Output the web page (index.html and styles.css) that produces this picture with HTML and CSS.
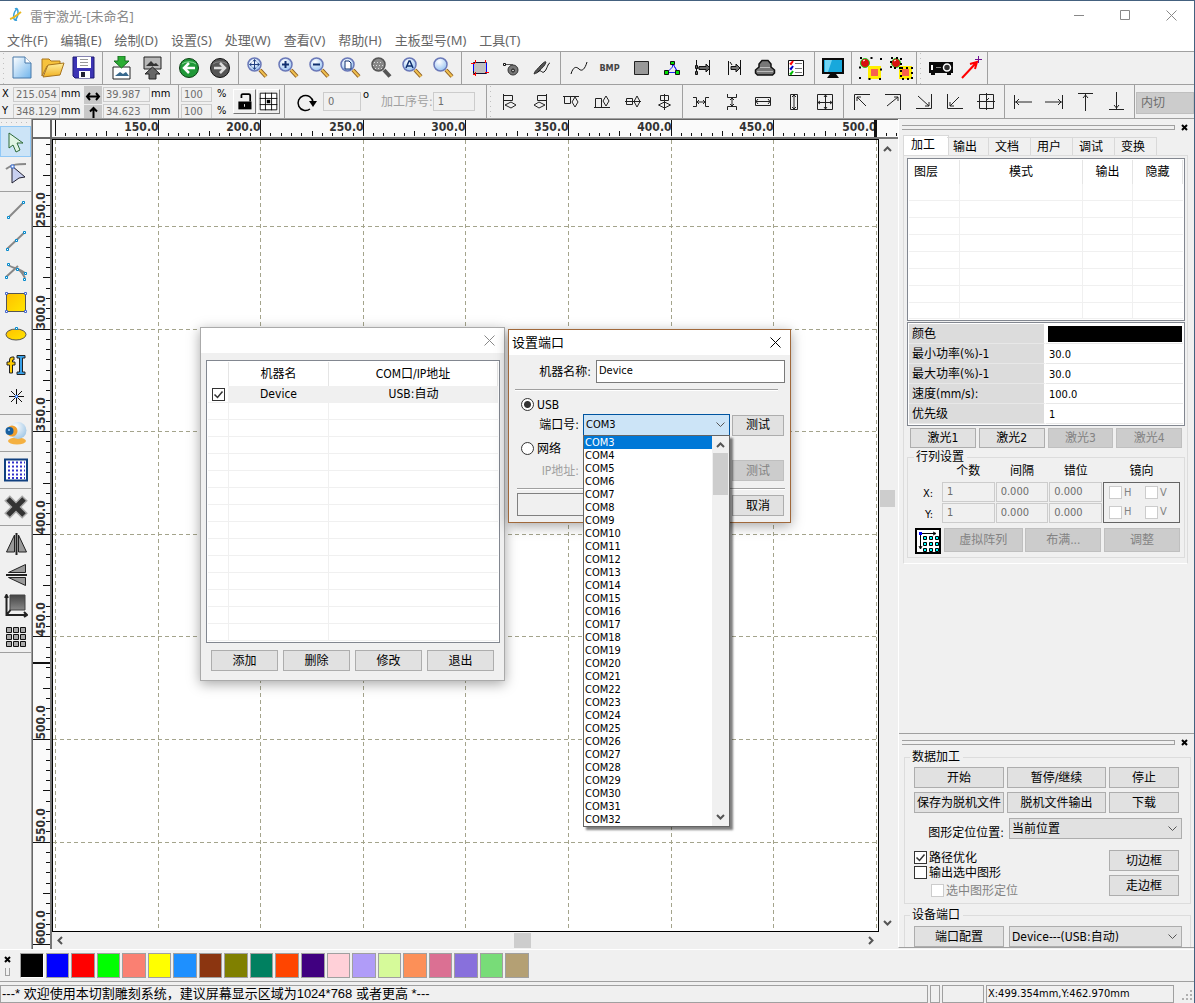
FILE: index.html
```html
<!DOCTYPE html>
<html lang="zh-CN">
<head>
<meta charset="utf-8">
<title>雷宇激光-[未命名]</title>
<link rel="stylesheet" href="styles.css">
</head>
<body>
<svg class="defs" aria-hidden="true">
  <defs>
    <linearGradient id="gPage" x1="0" y1="0" x2="1" y2="1"><stop offset="0" stop-color="#fff"/><stop offset="1" stop-color="#6fb4ec"/></linearGradient>
    <linearGradient id="gFolder" x1="0" y1="0" x2="0" y2="1"><stop offset="0" stop-color="#fff0a0"/><stop offset="1" stop-color="#f0b020"/></linearGradient>
    <radialGradient id="gLens" cx="0.4" cy="0.3" r="0.8"><stop offset="0" stop-color="#fff"/><stop offset="1" stop-color="#8cbcf0"/></radialGradient>
    <linearGradient id="gGold" x1="0" y1="0" x2="1" y2="1"><stop offset="0" stop-color="#ffc000"/><stop offset="1" stop-color="#ffe600"/></linearGradient>
    <linearGradient id="gDark" x1="0" y1="0" x2="0" y2="1"><stop offset="0" stop-color="#444"/><stop offset="1" stop-color="#888"/></linearGradient>
    <radialGradient id="gBall" cx="0.35" cy="0.3" r="0.8"><stop offset="0" stop-color="#fff"/><stop offset="1" stop-color="#9cc4e4"/></radialGradient>
  </defs>
  <symbol id="mag" viewBox="0 0 24 24"><path d="M15 14l6 6.500" stroke="#8a5a20" stroke-width="4"/><path d="M15 14l6 6.500" stroke="#f0c050" stroke-width="2"/><circle cx="9.500" cy="8.500" r="6.500" fill="url(#gLens)" stroke="#6a78b8" stroke-width="1.500"/></symbol>
  <symbol id="ball" viewBox="0 0 24 24"><circle cx="7" cy="7" r="4.500" fill="#d81010" stroke="#20d020"/><path d="M5 5l2-1" stroke="#fff"/><rect x="11.500" y="11.500" width="10" height="10" fill="#f86050" stroke="#ffee00" stroke-width="3"/></symbol>
</svg>

<div class="window">
  <header class="titlebar">
    <svg class="logo" viewBox="0 0 16 16"><path d="M7 2c4-3 4 8 0 11M9 13c-5 2-4-8 0-11" fill="none" stroke="#38a0d8" stroke-width="1.500"/><path d="M2 12C6 11 9 8 13 5" fill="none" stroke="#e8b820" stroke-width="2"/></svg>
    <h1>雷宇激光-[未命名]</h1>
    <div class="caption">
      <button aria-label="最小化"><svg viewBox="0 0 11 11"><path d="M0 5.500h10"/></svg></button>
      <button aria-label="最大化"><svg viewBox="0 0 11 11"><path d="M.5.5h9v9h-9z"/></svg></button>
      <button aria-label="关闭"><svg viewBox="0 0 11 11"><path d="M.5.5l10 10M10.500.5l-10 10"/></svg></button>
    </div>
  </header>
  <nav class="menubar">
    <a href="#">文件(F)</a><a href="#">编辑(E)</a><a href="#">绘制(D)</a><a href="#">设置(S)</a><a href="#">处理(W)</a><a href="#">查看(V)</a><a href="#">帮助(H)</a><a href="#">主板型号(M)</a><a href="#">工具(T)</a>
  </nav>

  <div class="toolbar">
    <div class="group grip">
      <button class="tool" aria-label="新建"><svg viewBox="0 0 24 24"><path d="M3 1h12l6 6v15H3z" fill="url(#gPage)" stroke="#4878a8"/><path d="M15 1v6h6" fill="#fff" stroke="#4878a8"/></svg></button>
      <button class="tool" aria-label="打开"><svg viewBox="0 0 24 24"><path d="M1 3h7l2 2h9v5H6L1 20z" fill="#f6c23c" stroke="#a8741c"/><path d="M2 21L7 9l16-2-4 12z" fill="url(#gFolder)" stroke="#a8741c"/></svg></button>
      <button class="tool" aria-label="保存"><svg viewBox="0 0 24 24"><path d="M1 1h21v21H3l-2-2z" fill="#3c34b4" stroke="#1c1870"/><path d="M5 1h14v11H5z" fill="#fff"/><path d="M8 3.500h8M8 6.500h8M8 9.500h8" stroke="#999"/><path d="M7 15h11v7H7z" fill="#fff"/><path d="M9 16h4v5H9z" fill="#223"/></svg></button>
    </div>
    <div class="group">
      <button class="tool" aria-label="导入"><svg viewBox="0 0 24 24"><path d="M4 11h17v12H4z" fill="#fff" stroke="#222"/><path d="M6 20l5-4 3 2 3-2 3 4z" fill="#38688c"/><path d="M9 0h7v5h4l-7.500 7L5 5h4z" fill="#2cae34" stroke="#186c20"/></svg></button>
      <button class="tool" aria-label="导出"><svg viewBox="0 0 24 24"><path d="M4 1h17v12H4z" fill="#b8b8b8" stroke="#222"/><path d="M6 10l5-5 3 3 2-1 3 3z" fill="#333"/><path d="M9 23h7v-5h4l-7.500-7L5 18h4z" fill="#666" stroke="#222"/></svg></button>
    </div>
    <div class="group">
      <button class="tool" aria-label="撤销"><svg viewBox="0 0 24 24"><circle cx="12" cy="12" r="9.500" fill="#209838" stroke="#0c4014"/><path d="M5 8a9 6 0 0 1 14 0" fill="none" stroke="#8cd898"/><path d="M18 12H7m5-5l-5 5 5 5" fill="none" stroke="#fff" stroke-width="2.500"/></svg></button>
      <button class="tool" aria-label="重做"><svg viewBox="0 0 24 24"><circle cx="12" cy="12" r="9.500" fill="#555" stroke="#111"/><path d="M5 8a9 6 0 0 1 14 0" fill="none" stroke="#888"/><path d="M6 12h11m-5-5l5 5-5 5" fill="none" stroke="#ddd" stroke-width="2.500"/></svg></button>
    </div>
    <div class="group">
      <button class="tool" aria-label="平移"><svg viewBox="0 0 24 24"><use href="#mag"/><path d="M9.500 4v9M5 8.500h9M8 5.500l1.500-2 1.500 2M8 11.500l1.500 2 1.500-2M6.500 7l-2 1.500 2 1.500M12.500 7l2 1.500-2 1.500" fill="none" stroke="#204080"/></svg></button>
      <button class="tool" aria-label="放大"><svg viewBox="0 0 24 24"><use href="#mag"/><path d="M9.500 5v7M6 8.500h7" stroke="#103070" stroke-width="2"/></svg></button>
      <button class="tool" aria-label="缩小"><svg viewBox="0 0 24 24"><use href="#mag"/><path d="M6 8.500h7" stroke="#103070" stroke-width="2"/></svg></button>
      <button class="tool" aria-label="查看页面"><svg viewBox="0 0 24 24"><use href="#mag"/><path d="M7 5h4l2 2v6H7z" fill="#fff" stroke="#103070"/></svg></button>
      <button class="tool" aria-label="查看数据"><svg viewBox="0 0 24 24"><path d="M15 14l6 6.500" stroke="#555" stroke-width="4"/><circle cx="9.500" cy="8.500" r="6.500" fill="#888" stroke="#555" stroke-width="1.500"/><path d="M5 6.500h9M4 9.500h11M6 12.500h7" stroke="#ddd" stroke-dasharray="1 2"/></svg></button>
      <button class="tool" aria-label="查看全部"><svg viewBox="0 0 24 24"><use href="#mag"/><path d="M6 12l3-7h1l3 7M7 10h5" fill="none" stroke="#103070" stroke-width="1.500"/></svg></button>
      <button class="tool" aria-label="查看选择"><svg viewBox="0 0 24 24"><use href="#mag"/></svg></button>
    </div>
    <div class="group">
      <button class="tool" aria-label="跟踪边框"><svg viewBox="0 0 24 24"><path d="M5.500 6.500h13v11h-13z" fill="#c0c0c0" stroke="#101030"/><path d="M18.500 7v10M5.500 7v8" stroke="#00f"/><path d="M3 7.500h4M7.500 4v3M17.500 4v3M17 16.500h4M7.500 16v4M5 18.500h3" stroke="#f00"/></svg></button>
      <button class="tool" aria-label="设置切入点"><svg viewBox="0 0 24 24"><circle cx="14" cy="14" r="5" fill="#777" stroke="#333"/><circle cx="14" cy="14.500" r="1.500" fill="#bbb" stroke="#111"/><path d="M6 8.500h8" stroke="#555"/><path d="M4.500 7.500h2v2h-2z" fill="#fff" stroke="#111"/></svg></button>
      <button class="tool" aria-label="画笔"><svg viewBox="0 0 24 24"><path d="M4 18c1-4 5-6 6-8 3-3 5-5 6-4-1 4-4 6-6 8-2 3-4 3-6 4z" fill="#555" stroke="#333"/><path d="M8 16c3-4 4 3 7-1 2-2 3-8 5-8" fill="none" stroke="#111"/></svg></button>
    </div>
    <div class="group">
      <button class="tool" aria-label="曲线平滑"><svg viewBox="0 0 24 24"><path d="M4 18c2-7 5-8 8-5s6 0 8-7" fill="none" stroke="#111"/></svg></button>
      <button class="tool bmp" aria-label="位图">BMP</button>
      <button class="tool" aria-label="填充"><svg viewBox="0 0 24 24"><path d="M5.500 5.500h14v13h-14z" fill="#999" stroke="#222"/></svg></button>
      <button class="tool" aria-label="节点"><svg viewBox="0 0 24 24"><path d="M12.500 7v4L7 16.500h11zm0 0l5 9" fill="none" stroke="#22e"/><path d="M10.500 5.500h4v3h-4zM4.500 14.500h4v4h-4zM15.500 14.500h4v4h-4z" fill="#0d0" stroke="#111"/></svg></button>
      <button class="tool" aria-label="合并相连线"><svg viewBox="0 0 24 24"><path d="M5.500 4v12M18.500 4v15M5 12h3" stroke="#111"/><path d="M8 10.500h7V8l4 4-4 4v-2.500H8zM4.500 9.500h2v3h-2zM4.500 15.500h2v3h-2z" fill="#666" stroke="#111"/></svg></button>
      <button class="tool" aria-label="偏移"><svg viewBox="0 0 24 24"><path d="M6.500 5v14M18.500 4v15M8 6l2 3" stroke="#111"/><path d="M9 10.500h5V8l4 4-4 4v-2.500H9z" fill="#777" stroke="#111"/></svg></button>
      <button class="tool" aria-label="数据检查"><svg viewBox="0 0 24 24"><path d="M2.500 17v-3l3.500-3V8l3-3.500h6L18 8v3l3.500 3v3l-2 2h-15z" fill="#777" stroke="#111" stroke-width="1.500"/><path d="M7 11.500h10M4 15.500h16" stroke="#bbb"/></svg></button>
      <button class="tool" aria-label="加工预览"><svg viewBox="0 0 24 24"><path d="M4.500 4.500h15v15h-15z" fill="#fff" stroke="#111"/><path d="M11 7.500h7M11 12.500h7M11 16.500h7" stroke="#777"/><path d="M6 7l1 1 2-3" stroke="#f00" fill="none" stroke-width="2"/><path d="M6 12l1 1 2-3" stroke="#00c" fill="none" stroke-width="2"/><path d="M6 17l1 1 2-3" stroke="#0b0" fill="none" stroke-width="2"/></svg></button>
    </div>
    <div class="group">
      <button class="tool" aria-label="显示器"><svg viewBox="0 0 24 24"><path d="M1 2h22v16H1z" fill="#0a0a0a"/><path d="M3 4h18v12H3z" fill="#18a8dc"/><path d="M4 4h7l-4 12H4z" fill="#70d4f4"/><path d="M9 18h6l3 4H6z" fill="#0a0a0a"/></svg></button>
    </div>
    <div class="group tight">
      <button class="tool" aria-label="群组"><svg viewBox="0 0 24 24"><use href="#ball"/><path d="M2 2h21v21H2z" fill="none" stroke="#000" stroke-width="2" stroke-dasharray="2 8.500"/></svg></button>
      <button class="tool" aria-label="解散群组"><svg viewBox="0 0 24 24"><use href="#ball"/><path d="M2 2h10v10H2zM12 12h11v11H12z" fill="none" stroke="#000" stroke-width="2" stroke-dasharray="2 3"/></svg></button>
    </div>
    <div class="group grip after-tight">
      <button class="tool" aria-label="投影"><svg viewBox="0 0 24 24"><path d="M0 6h24v11h-2v2h-4v-2H6v2H2v-2H0z" fill="#0a0a0a"/><path d="M3 9v5" stroke="#fff" stroke-width="2"/><path d="M7 11.500h5" stroke="#888"/><circle cx="18" cy="11.500" r="3.500" fill="#333" stroke="#fff" stroke-width="1.500"/></svg></button>
      <button class="tool" aria-label="定位"><svg viewBox="0 0 24 24"><path d="M2 22L16 7m-6 1l7-2-2 7" fill="none" stroke="#f00" stroke-width="2"/><path d="M18.500 0v7M15 3.500h7" stroke="#701090"/></svg></button>
    </div>
  </div>

  <div class="toolbar second">
    <div class="group fields">
      <div class="coords">
        <label for="px">X</label><input id="px" value="215.054" disabled><span>mm</span>
        <label for="py">Y</label><input id="py" value="348.129" disabled><span>mm</span>
      </div>
      <svg class="extent" viewBox="0 0 18 32"><path d="M3 10.500h12M6 7l-3 3.500L6 14M12 7l3 3.500-3 3.500M9.500 22v10M6 25.500L9.500 22l3.500 3.500" fill="none" stroke="#000" stroke-width="2"/><path d="M0 18.500h18" stroke="#eee"/></svg>
      <div class="coords size">
        <input aria-label="宽度" value="39.987" disabled><span>mm</span>
        <input aria-label="高度" value="34.623" disabled><span>mm</span>
      </div>
    </div>
    <div class="group fields">
      <div class="coords scale">
        <input aria-label="横向比例" value="100" disabled><span>%</span>
        <input aria-label="纵向比例" value="100" disabled><span>%</span>
      </div>
      <button class="raised" aria-label="锁定比例"><svg viewBox="0 0 24 24"><path d="M5 12h15v9H5z"/><path d="M8.500 8V4.500Q8.500 3.500 10 3.500h7q1.500 0 1.500 1.500v7" fill="none" stroke="#000" stroke-width="2"/><path d="M12 15v3" stroke="#fff"/></svg></button>
      <button class="raised" aria-label="参考点"><svg viewBox="0 0 24 24"><path d="M2.500 2.500h19v19h-19zM8.500 2v20M15.500 2v20M2 8.500h20M2 15.500h20" fill="#fff" stroke="#000"/><path d="M10 10h4v4h-4z"/></svg></button>
    </div>
    <div class="group rotate">
      <svg class="turn" viewBox="0 0 24 24"><path d="M17 19a7.500 7.500 0 1 1 3-7" fill="none" stroke="#000" stroke-width="1.500"/><path d="M16 11h8l-4 6z"/></svg>
      <input aria-label="旋转角度" class="angle" value="0" disabled><span class="deg">o</span>
      <label class="muted" for="order">加工序号:</label><input id="order" class="order" value="1" disabled>
    </div>
    <div class="group grip line">
      <button class="tool" aria-label="左对齐"><svg viewBox="0 0 24 24"><path d="M6.500 4v16M7 5.500h8.500v5H7M8 15l6-3 5 3-5 3z"/></svg></button>
      <button class="tool" aria-label="右对齐"><svg viewBox="0 0 24 24"><path d="M18.500 4v16M18 5.500H9.500v5H18M17 15l-6-3-5 3 5 3z"/></svg></button>
      <button class="tool" aria-label="顶对齐"><svg viewBox="0 0 24 24"><path d="M4 6.500h16M5.500 7v6.500h6V7M16 7l3 5-3 5-3-5z"/></svg></button>
      <button class="tool" aria-label="底对齐"><svg viewBox="0 0 24 24"><path d="M4 17.500h16M5.500 17V8.500h6V17M16 6l3 5-3 5-3-5z"/></svg></button>
      <button class="tool" aria-label="水平居中"><svg viewBox="0 0 24 24"><path d="M4 11.500h16M5.500 8.500h6v6h-6zM16 6l3 5.500-3 5.500-3-5.500z"/></svg></button>
      <button class="tool" aria-label="垂直居中"><svg viewBox="0 0 24 24"><path d="M12.500 4v16M8.500 5.500h8v5h-8zM12.500 12l6 3-6 3-6-3z"/></svg></button>
    </div>
    <div class="group line">
      <button class="tool" aria-label="等水平间距"><svg viewBox="0 0 24 24"><path d="M4 7.500h3.500v9H4M20 7.500h-3.500v9H20M8 12h8M10 10l-2 2 2 2M14 10l2 2-2 2"/></svg></button>
      <button class="tool" aria-label="等垂直间距"><svg viewBox="0 0 24 24"><path d="M7.500 4v3.500h9V4M7.500 20v-3.500h9V20M12 8v8M10 10l2-2 2 2M10 14l2 2 2-2"/></svg></button>
      <button class="tool" aria-label="等宽"><svg viewBox="0 0 24 24"><path d="M4.500 7.500h15v8h-15zM4 11.500h16M7 9l-2 2.500L7 14M17 9l2 2.500-2 2.500"/></svg></button>
      <button class="tool" aria-label="等高"><svg viewBox="0 0 24 24"><path d="M8.500 4.500h7v15h-7zM12 4v16M10 7l2-2 2 2M10 17l2 2 2-2"/></svg></button>
      <button class="tool" aria-label="等大小"><svg viewBox="0 0 24 24"><path d="M4.500 4.500h15v15h-15zM4 12.500h16M12.500 4v16M11 7l1.500-2L14 7M11 17l1.500 2 1.500-2M7 11l-2 1.500L7 14M17 11l2 1.500-2 1.500"/></svg></button>
    </div>
    <div class="group line">
      <button class="tool" aria-label="左上"><svg viewBox="0 0 24 24"><path d="M4.500 20V4.500H20M7 7l9 9M7 11V7h4"/></svg></button>
      <button class="tool" aria-label="右上"><svg viewBox="0 0 24 24"><path d="M4 4.500h15.500V20M17 7l-11 9M13 7h4v4"/></svg></button>
      <button class="tool" aria-label="右下"><svg viewBox="0 0 24 24"><path d="M4 18.500h15.500V4M6 6l11 10M17 12v4h-4"/></svg></button>
      <button class="tool" aria-label="左下"><svg viewBox="0 0 24 24"><path d="M4.500 4v14.500H20M16 7l-9 9M7 12v4h4"/></svg></button>
      <button class="tool" aria-label="页面居中"><svg viewBox="0 0 24 24"><path d="M5.500 4.500h14v14h-14zM3 11.500h18M12.500 3v17M15 8l-4 4"/></svg></button>
    </div>
    <div class="group line">
      <button class="tool" aria-label="到左边"><svg viewBox="0 0 24 24"><path d="M3.500 5v14M4 12h17M8 9l-3 3 3 3"/></svg></button>
      <button class="tool" aria-label="到右边"><svg viewBox="0 0 24 24"><path d="M20.500 5v14M20 12H3M16 9l3 3-3 3"/></svg></button>
      <button class="tool" aria-label="到顶边"><svg viewBox="0 0 24 24"><path d="M5 3.500h15M12.500 4v17M10 8l2.500-3L15 8"/></svg></button>
      <button class="tool" aria-label="到底边"><svg viewBox="0 0 24 24"><path d="M5 19.500h15M12.500 2v17M10 15l2.500 3 2.500-3"/></svg></button>
    </div>
    <select class="cutmode" aria-label="切割方式" disabled><option>内切</option></select>
  </div>

  <main class="main">
    <aside class="sidebar">
      <div class="tools">
        <button class="tool active" aria-label="选择"><svg viewBox="0 0 24 24"><path d="M5 3v15l4-3 3 7 4-2-3-7h6z" fill="#e0f4e4" stroke="#2c6838"/></svg></button>
        <button class="tool" aria-label="节点编辑"><svg viewBox="0 0 24 24"><path d="M2 8c6-5 12-5 20-5" fill="none" stroke="#888" stroke-width="2"/><path d="M8 5l13 11-6 1-7 5z" fill="#c8d0f0" stroke="#223"/><path d="M7 4h3v3H7z" fill="#fff" stroke="#36c"/></svg></button>
      </div>
      <div class="tools">
        <button class="tool" aria-label="直线"><svg viewBox="0 0 24 24"><path d="M5 19L19 5" stroke="#888" stroke-width="2"/><path d="M3.500 18.500h2v2h-2zM18.500 3.500h2v2h-2z" fill="#fff" stroke="#08c"/></svg></button>
        <button class="tool" aria-label="多义线"><svg viewBox="0 0 24 24"><path d="M3 20L21 3" stroke="#888" stroke-width="2"/><path d="M2.500 19.500h2v2h-2zM11.500 10.500h2v2h-2zM19.500 2.500h2v2h-2z" fill="#fff" stroke="#08c"/></svg></button>
        <button class="tool" aria-label="曲线"><svg viewBox="0 0 24 24"><path d="M2 17L14 6M4 5c7 4 13 4 18 9M12 9c5 0 7 6 9 9" fill="none" stroke="#888" stroke-width="2"/><path d="M3.500 3.500h2v2h-2zM1.500 16.500h2v2h-2zM12.500 8.500h2v2h-2zM20.500 12.500h2v2h-2zM19.500 18.500h2v2h-2z" fill="#fff" stroke="#08c"/></svg></button>
        <button class="tool" aria-label="矩形"><svg viewBox="0 0 24 24"><path d="M2.500 2.500h19v18h-19z" fill="url(#gGold)" stroke="#555"/><path d="M1.500 1.500h2v2h-2zM20.500 1.500h2v2h-2zM1.500 19.500h2v2h-2zM20.500 19.500h2v2h-2z" fill="#fff" stroke="#46c"/></svg></button>
        <button class="tool" aria-label="椭圆"><svg viewBox="0 0 24 24"><ellipse cx="12" cy="12.500" rx="10" ry="5.500" fill="url(#gGold)" stroke="#555"/><path d="M11.500 5.500h2v2h-2z" fill="#fff" stroke="#08c"/></svg></button>
        <button class="tool" aria-label="文字"><svg viewBox="0 0 24 24"><path d="M10 4H8Q5.500 4 5.500 7v2H3v3h2.500v8h3v-8H11V9H8.500V7H10z" fill="#fc0" stroke="#222"/><path d="M13 2.500h8v2.500h-2.500v14H21v2.500h-8V19h2.500V5H13z" fill="#38a0e8" stroke="#222"/></svg></button>
        <button class="tool" aria-label="点"><svg viewBox="0 0 24 24"><path d="M12.500 5v15M5 12.500h15M7 7l11 11M18 7L7 18" stroke="#111"/><path d="M11.500 11.500h2v2h-2z" fill="#fff" stroke="#48f"/></svg></button>
      </div>
      <div class="tools">
        <button class="tool" aria-label="摄像头"><svg viewBox="0 0 24 24"><ellipse cx="13" cy="20" rx="9" ry="3.500" fill="#f4b040"/><circle cx="14" cy="9.500" r="8.500" fill="url(#gBall)"/><circle cx="8" cy="10" r="5.500" fill="#f0a030"/><circle cx="5.500" cy="10" r="4" fill="#1860a0"/><circle cx="5" cy="9" r="1" fill="#9cf"/></svg></button>
      </div>
      <div class="tools">
        <button class="tool" aria-label="网格"><svg viewBox="0 0 24 24"><path d="M1 1.500h22v21H1z" fill="#fff" stroke="#104080" stroke-width="2"/><path d="M4 4.500h17M4 8.500h17M4 12.500h17M4 16.500h17M4 20h17" stroke="#33c" stroke-width="2" stroke-dasharray="2 2"/></svg></button>
      </div>
      <div class="tools">
        <button class="tool" aria-label="删除"><svg viewBox="0 0 24 24"><path d="M3 3l18 18M21 3L3 21" stroke="#aaa" stroke-width="8"/><path d="M4 4l16 16M20 4L4 20" stroke="#333" stroke-width="5"/></svg></button>
      </div>
      <div class="tools last">
        <button class="tool" aria-label="水平镜像"><svg viewBox="0 0 24 24"><path d="M10.500 3v17h-8zM14.500 3v17h8z" fill="#999" stroke="#222"/><path d="M12.500 1v22" stroke="#222" stroke-width="2"/></svg></button>
        <button class="tool" aria-label="垂直镜像"><svg viewBox="0 0 24 24"><path d="M21.500 1.500v8h-17zM21.500 14.500v8l-17-8z" fill="#999" stroke="#222"/><path d="M2 12h21" stroke="#222" stroke-width="2"/></svg></button>
        <button class="tool" aria-label="停靠"><svg viewBox="0 0 24 24"><path d="M6 1h15v15H6z" fill="url(#gDark)" stroke="#444"/><path d="M2.500 1v20H23M2.500 21l4-5M20 18l3 3-3 2M1 4l1.500-3L4 4" fill="none" stroke="#222" stroke-width="2"/></svg></button>
        <button class="tool" aria-label="阵列"><svg viewBox="0 0 24 24"><path d="M2.500 2.500h5v5h-5zM9.500 2.500h5v5h-5zM16.500 2.500h5v5h-5zM2.500 9.500h5v5h-5zM9.500 9.500h5v5h-5zM16.500 9.500h5v5h-5zM2.500 16.500h5v5h-5zM9.500 16.500h5v5h-5zM16.500 16.500h5v5h-5z" fill="#aaa" stroke="#111"/></svg></button>
      </div>
    </aside>

    <section class="workspace">
      <div class="corner"></div>
      <svg class="ruler-x" id="rulerX"></svg>
      <svg class="ruler-y" id="rulerY"></svg>
      <svg class="canvas" id="canvas"></svg>
      <div class="scroll-y">
        <svg viewBox="0 0 9 6"><path d="M1 5l3.500-3.500L8 5"/></svg>
        <i></i>
        <svg viewBox="0 0 9 6"><path d="M1 1l3.500 3.500L8 1"/></svg>
      </div>
      <div class="scroll-x">
        <svg viewBox="0 0 6 9"><path d="M5 1L1.500 4.500 5 8"/></svg>
        <i></i>
        <svg viewBox="0 0 6 9"><path d="M1 1l3.500 3.500L1 8"/></svg>
      </div>
    </section>

    <aside class="docks">
      <section class="dock upper">
        <div class="handle"><i></i><button aria-label="关闭面板"><svg viewBox="0 0 7 7"><path d="M1 1l5 5M6 1L1 6"/></svg></button></div>
        <div class="tabs">
          <button class="on">加工</button><button>输出</button><button>文档</button><button>用户</button><button>调试</button><button>变换</button>
        </div>
        <div class="page">
          <div class="listbox">
            <table class="grid layers">
              <colgroup><col class="c51"><col><col class="c50"><col class="c50"></colgroup>
              <thead><tr><th>图层</th><th>模式</th><th>输出</th><th>隐藏</th></tr></thead>
              <tbody>
                <tr><td></td><td></td><td></td><td></td></tr>
                <tr><td></td><td></td><td></td><td></td></tr>
                <tr><td></td><td></td><td></td><td></td></tr>
                <tr><td></td><td></td><td></td><td></td></tr>
                <tr><td></td><td></td><td></td><td></td></tr>
                <tr><td></td><td></td><td></td><td></td></tr>
                <tr><td></td><td></td><td></td><td></td></tr>
                <tr class="partial"><td></td><td></td><td></td><td></td></tr>
              </tbody>
            </table>
          </div>
          <div class="listbox props">
            <table>
              <tr><th>颜色</th><td><div class="ink"></div></td></tr>
              <tr><th>最小功率(%)-1</th><td>30.0</td></tr>
              <tr><th>最大功率(%)-1</th><td>30.0</td></tr>
              <tr><th>速度(mm/s):</th><td>100.0</td></tr>
              <tr><th>优先级</th><td>1</td></tr>
            </table>
          </div>
          <div class="lasers">
            <button class="btn">激光1</button><button class="btn">激光2</button><button class="btn" disabled>激光3</button><button class="btn" disabled>激光4</button>
          </div>
          <fieldset class="array">
            <legend>行列设置</legend>
            <div class="array-grid">
              <span></span><b>个数</b><b>间隔</b><b>错位</b><b>镜向</b>
              <label for="xn">X:</label><input id="xn" value="1" disabled><input aria-label="X间隔" value="0.000" disabled><input aria-label="X错位" value="0.000" disabled>
              <div class="mirror">
                <label><input type="checkbox" disabled>H</label><label><input type="checkbox" disabled>V</label>
                <label><input type="checkbox" disabled>H</label><label><input type="checkbox" disabled>V</label>
              </div>
              <label for="yn">Y:</label><input id="yn" value="1" disabled><input aria-label="Y间隔" value="0.000" disabled><input aria-label="Y错位" value="0.000" disabled>
            </div>
            <div class="array-actions">
              <button class="matrix" aria-label="阵列方向"><svg viewBox="0 0 22 22"><path d="M3.500 4v14M4 3.500h14M2 16l1.500 3L5 16M16 2l3 1.500L16 5" fill="none" stroke="#000"/><path d="M2 2h3v3H2z" fill="#00f"/><path d="M6.500 6.500h3v3h-3zM12.500 6.500h3v3h-3zM18.500 6.500h3v3h-3zM6.500 12.500h3v3h-3zM12.500 12.500h3v3h-3zM18.500 12.500h3v3h-3zM6.500 18.500h3v3h-3zM12.500 18.500h3v3h-3zM18.500 18.500h3v3h-3z" fill="#0ff" stroke="#000"/></svg></button>
              <button class="btn" disabled>虚拟阵列</button><button class="btn" disabled>布满...</button><button class="btn" disabled>调整</button>
            </div>
          </fieldset>
        </div>
      </section>

      <section class="dock lower">
        <div class="handle"><i></i><button aria-label="关闭面板"><svg viewBox="0 0 7 7"><path d="M1 1l5 5M6 1L1 6"/></svg></button></div>
        <fieldset class="work">
          <legend>数据加工</legend>
          <div class="work-grid">
            <button class="btn">开始</button><button class="btn">暂停/继续</button><button class="btn">停止</button>
            <button class="btn">保存为脱机文件</button><button class="btn">脱机文件输出</button><button class="btn">下载</button>
          </div>
          <div class="pick"><label for="origin">图形定位位置:</label><select id="origin"><option>当前位置</option></select></div>
          <div class="opts">
            <div class="checks">
              <label><input type="checkbox" checked>路径优化</label>
              <label><input type="checkbox">输出选中图形</label>
              <label class="sub"><input type="checkbox" disabled>选中图形定位</label>
            </div>
            <div class="frames"><button class="btn">切边框</button><button class="btn">走边框</button></div>
          </div>
        </fieldset>
        <fieldset class="work port">
          <legend>设备端口</legend>
          <div class="pick"><button class="btn">端口配置</button><select aria-label="设备"><option>Device---(USB:自动)</option></select></div>
        </fieldset>
      </section>
    </aside>
  </main>

  <div class="palette">
    <div class="palette-handle"><svg viewBox="0 0 7 7"><path d="M1 1l5 5M6 1L1 6"/></svg><i></i></div>
    <div class="swatches">
      <button aria-label="黑" class="chosen" style="background:#000000"></button><button aria-label="蓝" style="background:#0000ff"></button><button aria-label="红" style="background:#ff0000"></button><button aria-label="绿" style="background:#00ff00"></button><button aria-label="鲑红" style="background:#fa8072"></button><button aria-label="黄" style="background:#ffff00"></button><button aria-label="道奇蓝" style="background:#1e90ff"></button><button aria-label="棕" style="background:#8b3510"></button><button aria-label="橄榄" style="background:#808000"></button><button aria-label="墨绿" style="background:#008060"></button><button aria-label="橙红" style="background:#ff4500"></button><button aria-label="靛" style="background:#400080"></button><button aria-label="粉" style="background:#ffd0d8"></button><button aria-label="淡紫" style="background:#b09cf8"></button><button aria-label="淡绿" style="background:#d6fa9a"></button><button aria-label="橙" style="background:#fc9058"></button><button aria-label="玫红" style="background:#db7093"></button><button aria-label="紫" style="background:#8870dc"></button><button aria-label="草绿" style="background:#78dc78"></button><button aria-label="卡其" style="background:#b4a074"></button>
    </div>
  </div>
  <footer class="status">
    <span class="msg">---* 欢迎使用本切割雕刻系统，建议屏幕显示区域为1024*768 或者更高 *---</span><span class="s10"></span><span class="s42"></span><span class="pos">X:499.354mm,Y:462.970mm</span>
    <svg viewBox="0 0 12 12"><path d="M8 1h2v2H8zM4 5h2v2H4zM8 5h2v2H8zM0 9h2v2H0zM4 9h2v2H4zM8 9h2v2H8z" fill="#b0b0b0"/></svg>
  </footer>
</div>

<div class="dialog machines" role="dialog" aria-label="机器列表">
  <div class="dlg-title"><button aria-label="关闭"><svg viewBox="0 0 11 11"><path d="M.5.5l10 10M10.500.5l-10 10"/></svg></button></div>
  <div class="listbox">
    <table class="grid">
      <colgroup><col class="c21"><col class="c100"><col></colgroup>
      <thead><tr><th></th><th>机器名</th><th>COM口/IP地址</th></tr></thead>
      <tbody>
        <tr class="sel"><td><input type="checkbox" aria-label="Device" checked></td><td>Device</td><td>USB:自动</td></tr>
        <tr><td></td><td></td><td></td></tr>
        <tr><td></td><td></td><td></td></tr>
        <tr><td></td><td></td><td></td></tr>
        <tr><td></td><td></td><td></td></tr>
        <tr><td></td><td></td><td></td></tr>
        <tr><td></td><td></td><td></td></tr>
        <tr><td></td><td></td><td></td></tr>
        <tr><td></td><td></td><td></td></tr>
        <tr><td></td><td></td><td></td></tr>
        <tr><td></td><td></td><td></td></tr>
        <tr><td></td><td></td><td></td></tr>
        <tr><td></td><td></td><td></td></tr>
        <tr><td></td><td></td><td></td></tr>
        <tr><td></td><td></td><td></td></tr>
      </tbody>
    </table>
  </div>
  <div class="dlg-buttons"><button class="btn">添加</button><button class="btn">删除</button><button class="btn">修改</button><button class="btn">退出</button></div>
</div>

<div class="dialog port-dialog" role="dialog" aria-label="设置端口">
  <div class="dlg-title"><h2>设置端口</h2><button aria-label="关闭"><svg viewBox="0 0 11 11"><path d="M.5.5l10 10M10.500.5l-10 10"/></svg></button></div>
  <form class="form">
    <div class="name-row"><label for="mname">机器名称:</label><input id="mname" value="Device"></div>
    <hr>
    <label class="radio"><input type="radio" name="link" checked>USB</label>
    <div class="row">
      <label for="com">端口号:</label>
      <div class="combo">
        <select id="com"><option>COM3</option></select>
        <div class="drop">
          <ul>
            <li class="hot">COM3</li><li>COM4</li><li>COM5</li><li>COM6</li><li>COM7</li><li>COM8</li><li>COM9</li><li>COM10</li><li>COM11</li><li>COM12</li><li>COM13</li><li>COM14</li><li>COM15</li><li>COM16</li><li>COM17</li><li>COM18</li><li>COM19</li><li>COM20</li><li>COM21</li><li>COM22</li><li>COM23</li><li>COM24</li><li>COM25</li><li>COM26</li><li>COM27</li><li>COM28</li><li>COM29</li><li>COM30</li><li>COM31</li><li>COM32</li>
          </ul>
          <div class="drop-scroll">
            <svg viewBox="0 0 9 6"><path d="M1 5l3.500-3.500L8 5"/></svg>
            <i></i>
            <svg viewBox="0 0 9 6"><path d="M1 1l3.500 3.500L8 1"/></svg>
          </div>
        </div>
      </div>
      <button type="button" class="btn">测试</button>
    </div>
    <label class="radio"><input type="radio" name="link">网络</label>
    <div class="row"><label class="muted" for="ip">IP地址:</label><input id="ip" disabled><button type="button" class="btn" disabled>测试</button></div>
    <hr>
    <div class="foot"><input aria-label="测试结果" readonly><button type="button" class="btn">取消</button></div>
  </form>
</div>
<script src="app.js"></script>
</body>
</html>
```
FILE: styles.css
```css
* { box-sizing: border-box; }
body {
  margin: 0;
  background: #f0f0f0;
  color: #000;
  font: 12px/14px "DejaVu Sans Condensed", "Noto Sans", "Noto Sans CJK SC", sans-serif;
}
button, input, select { font: inherit; color: inherit; margin: 0; padding: 0; border-radius: 0; }
button { background: none; border: 0; }
svg { display: block; }
.defs { position: absolute; width: 0; height: 0; }
.muted { color: #a0a0a0; }

.window {
  display: flex;
  flex-direction: column;
  min-height: 100vh;
  border-top: 1px solid #44617f;
  border-right: 1px solid #44617f;
}

/* title and menu */
.titlebar { display: flex; align-items: center; height: 28px; padding-left: 8px; background: #fff; }
.titlebar .logo { width: 16px; height: 16px; margin-right: 6px; }
.titlebar h1 { flex: 1; margin: 0; font: 13px "Noto Sans", "Noto Sans CJK SC", sans-serif; color: #8a8a8a; }
.caption { display: flex; }
.caption button { width: 46px; height: 28px; display: grid; place-items: center; }
.caption svg, .dlg-title svg { width: 11px; height: 11px; fill: none; stroke: #888; }
.menubar { display: flex; gap: 13px; height: 23px; padding-left: 7px; background: #fff; border-bottom: 1px solid #a0a0a0; }
.menubar a { font: 13px/22px "Noto Sans", "Noto Sans CJK SC", sans-serif; color: #666; text-decoration: none; white-space: nowrap; }

/* toolbars */
.toolbar { display: flex; height: 33px; overflow: hidden; border-bottom: 1px solid #a0a0a0; }
.toolbar.second { height: 34px; }
.group { display: flex; align-items: center; flex: none; padding: 0 3px 0 2px; border-right: 1px solid #a0a0a0; }
.grip { padding-left: 6px; background: radial-gradient(circle, #c0c0c0 1px, transparent 1px) 2px 4px / 3px 5px repeat-y; }
.tight { padding-right: 0; }
.after-tight { padding: 0 0 0 8px; }
.tool { flex: none; width: 31px; height: 31px; display: grid; place-items: center; }
.tool svg { width: 24px; height: 24px; }
.line .tool svg { fill: none; stroke: #222; }
.bmp { font: bold 9px "DejaVu Sans Condensed", sans-serif; color: #444; }
.toolbar input, .array input:not([type]) { border: 1px solid #ccc; background: #f0f0f0; color: #6d6d6d; padding: 0 4px; min-width: 0; }
.fields { gap: 5px; }
.coords { display: grid; grid-template-columns: 10px 47px 18px; column-gap: 1px; row-gap: 2px; padding-top: 3px; font-size: 11px; }
.coords input { height: 15px; padding: 0 2px; }
.coords.size { grid-template-columns: 47px 24px; margin-left: -4px; }
.coords.scale { grid-template-columns: 31px 11px; column-gap: 5px; }
.extent { width: 18px; height: 32px; background: #c8c8c8; }
.raised { width: 23px; height: 25px; display: grid; place-items: center; border: 1px solid; border-color: #fff #777 #777 #fff; }
.raised + .raised { margin-left: -4px; }
.raised svg { width: 21px; height: 21px; }
.fields:nth-child(2) { padding-right: 4px; }
.rotate { width: 202px; padding-left: 8px; }
.turn { width: 24px; height: 24px; margin-right: 6px; }
.rotate input { width: 38px; height: 19px; font-size: 11px; }
.rotate .order { width: 42px; }
.deg { align-self: flex-start; margin: 3px 12px 0 2px; font-size: 11px; }
.cutmode { flex: 1; height: 22px; margin: 7px 0 0 1px; padding-left: 4px; appearance: none; border: 1px solid #bfbfbf; background: #ccc; color: #6d6d6d; opacity: 1; }

/* centre */
.main { display: flex; flex: 1; }
.sidebar { width: 32px; padding-top: 7px; background: radial-gradient(circle, #c0c0c0 1px, transparent 1px) 4px 2px / 5px 3px repeat-x; border-right: 1px solid #a0a0a0; }
.tools { padding-bottom: 3px; margin-bottom: 2px; border-bottom: 1px solid #a0a0a0; }
.tools.last { padding-bottom: 0; }
.sidebar .active { background: #cce4f7; border: 1px solid #90c8f6; }

.workspace { flex: 1; min-width: 0; display: grid; grid-template: 20px 1fr 17px / 20px 1fr 19px; }
.corner { background: #fafafa; border: 1px solid #666; border-width: 1px 2px 2px 1px; }
.ruler-x { grid-area: 1 / 2 / 2 / 4; width: 100%; height: 20px; background: #fafafa; border-top: 1px solid #666; border-bottom: 2px solid #777; }
.ruler-y { grid-area: 2 / 1 / 4 / 2; width: 20px; height: 100%; background: #fafafa; border-left: 1px solid #666; border-right: 2px solid #777; }
.workspace text { font: bold 12px "DejaVu Sans Condensed", "DejaVu Sans", sans-serif; fill: #333; }
.canvas { grid-area: 2 / 2; width: 100%; height: 100%; background: #fff; border: 1px solid #000; }
.scroll-y { grid-area: 2 / 3; display: flex; flex-direction: column; justify-content: space-between; align-items: center; padding: 7px 2px 6px 0; }
.scroll-x { grid-area: 3 / 2; display: flex; justify-content: space-between; align-items: center; padding: 0 5px; }
.scroll-y svg, .drop-scroll svg { width: 9px; height: 6px; }
.scroll-x svg { width: 6px; height: 9px; }
.scroll-y path, .scroll-x path, .drop-scroll path { fill: none; stroke: #555; stroke-width: 2; }
.scroll-y i { width: 15px; height: 17px; margin-top: -76px; background: #cdcdcd; }
.scroll-x i { width: 17px; height: 15px; margin-left: 114px; background: #cdcdcd; }
.ruler-x, .ruler-y, .canvas { shape-rendering: crispEdges; }

/* docks */
.docks { width: 296px; flex: none; display: flex; flex-direction: column; border-left: 1px solid #fff; border-bottom: 1px solid #a0a0a0; margin-bottom: 1px; }
.dock { padding-left: 4px; }
.upper { flex: 1; }
.lower { height: 214px; overflow: hidden; border-top: 1px solid #a0a0a0; }
.handle { display: flex; align-items: center; gap: 6px; height: 16px; padding-right: 4px; }
.handle i { flex: 1; height: 5px; margin-left: -1px; border: 1px solid #a0a0a0; border-left: 0; }
.handle button { width: 9px; height: 9px; }
.handle svg, .palette-handle svg { width: 7px; height: 7px; stroke: #000; stroke-width: 2; }
.tabs { display: flex; align-items: flex-end; height: 20px; }
.tabs button { height: 18px; width: 42px; border: 1px solid #d9d9d9; border-width: 1px 1px 0 0; text-align: left; padding-left: 6px; }
.tabs .on { width: 46px; height: 20px; margin-right: -2px; padding: 0 0 2px 7px; background: #fff; border-left-width: 1px; }
.page { margin-right: 6px; padding: 2px 2px 5px 3px; border: 1px solid #dcdcdc; border-bottom-color: #fff; display: flex; flex-direction: column; }
.listbox { border: 1px solid #828790; padding: 1px; background: #fff; }
.listbox table { width: 100%; border-collapse: separate; border-spacing: 0; table-layout: fixed; }
.grid th { height: 24px; padding: 0; font-weight: normal; border-right: 1px solid #e5e5e5; }
.grid td { height: 17px; line-height: 16px; padding: 0; text-align: center; border: 1px solid #f0f0f0; border-width: 0 1px 1px 0; }
.grid td:last-child { border-right: 0; }
.grid .partial td { height: 16px; }
.layers th:first-child { text-align: left; padding-left: 5px; }
.c51 { width: 51px; } .c50 { width: 50px; } .c21 { width: 21px; } .c100 { width: 100px; }
.props { margin: 1px 0 2px; }
.props th { width: 137px; height: 20px; padding: 0 0 0 3px; text-align: left; font-weight: normal; background: #dcdcdc; border-bottom: 1px solid #e8e8e8; border-right: 2px solid #fff; }
.props td { height: 20px; padding: 2px 0 0 3px; font-size: 11px; border-bottom: 1px solid #e8e8e8; }
.ink { height: 16px; margin: -1px 1px 0 -1px; background: #000; }
.btn { height: 21px; background: #e1e1e1; border: 1px solid #adadad; white-space: nowrap; line-height: 14px; }
.btn:disabled { background: #ccc; border-color: #bfbfbf; color: #838383; }
.lasers { display: grid; grid-template-columns: repeat(4, 1fr); gap: 3px; padding: 0 3px; margin-bottom: 2px; }
.lasers .btn { height: 20px; }

fieldset { margin: 0; min-width: 0; border: 1px solid #dcdcdc; }
legend { padding: 0 3px 0 2px; line-height: 14px; }
.array { padding: 0 4px 3px 7px; }
.array legend { margin-left: -1px; }
.array-grid { display: grid; grid-template: 17px 20px 20px / 26px 1fr 1fr 1fr 77px; gap: 1px; }
.array-grid b { font-weight: normal; text-align: center; }
.array-grid label { font-size: 11px; }
.array-grid > label { padding: 5px 8px 0 0; text-align: right; }
.array-grid > input { width: 100%; font-size: 11px; }
.mirror { grid-area: 2 / 5 / 4 / 6; display: grid; grid-template-columns: 36px 34px; padding-left: 5px; align-items: center; border: 1px solid #646464; color: #838383; }
.mirror label { display: flex; align-items: center; gap: 2px; }
.array-actions { display: grid; grid-template-columns: 26px 79px 76px 76px; justify-content: space-between; margin-top: 5px; }
.array-actions .btn { height: 24px; }
.matrix { height: 26px; padding: 0; border: 2px solid #000; background: #fff; }
.matrix svg { width: 22px; height: 22px; }

input[type=checkbox] { appearance: none; flex: none; width: 13px; height: 13px; border: 1px solid #333; background: #fff; }
input[type=checkbox]:checked { background: #fff url("data:image/svg+xml,%3Csvg xmlns='http://www.w3.org/2000/svg' viewBox='0 0 11 11'%3E%3Cpath d='M1.500 5.500l3 3 5-6' fill='none' stroke='%23333' stroke-width='1.500'/%3E%3C/svg%3E"); }
input[type=checkbox]:disabled { border-color: #ccc; }
select { appearance: none; padding: 0 2px; border: 1px solid #adadad; background: #e1e1e1 url("data:image/svg+xml,%3Csvg xmlns='http://www.w3.org/2000/svg' width='9' height='6' viewBox='0 0 9 6'%3E%3Cpath d='M.5.5l4 4 4-4' fill='none' stroke='%23555'/%3E%3C/svg%3E") right 4px center no-repeat; }

.work { margin: 0 3px 4px 1px; padding: 3px 8px 5px 9px; }
.work legend { margin-left: -4px; }
.port { padding-top: 4px; }
.work-grid { display: grid; grid-template-columns: 90px 99px 70px; gap: 4px 3px; margin-bottom: 5px; }
.pick { display: flex; gap: 5px; }
.pick label { width: 90px; padding-top: 8px; text-align: right; white-space: nowrap; }
.pick select { width: 173px; height: 21px; }
.pick .btn { width: 90px; }
.opts { display: grid; grid-template-columns: 192px 70px; gap: 3px; margin-top: 10px; }
.checks label { display: flex; align-items: center; gap: 2px; height: 15px; }
.checks .sub { margin: 3px 0 0 17px; color: #838383; }
.frames { display: grid; gap: 4px; align-content: start; }

/* colours and status */
.palette { display: flex; height: 33px; padding: 3px 0; border-top: 1px solid #fff; border-bottom: 1px solid #a0a0a0; }
.palette-handle { width: 20px; padding: 3px 0 0 4px; }
.palette-handle i { display: block; width: 5px; height: 8px; margin: 5px 0 0 1px; border: 1px solid #a0a0a0; border-top: 0; }
.swatches { width: 509px; display: grid; grid-template-columns: repeat(20, 1fr); gap: 2px; }
.swatches button { border: 1px solid #a0a0a0; }
.swatches .chosen { border-color: #a0a0a0 #fff #fff #a0a0a0; }
.status { display: flex; gap: 2px; height: 21px; padding: 3px 0 0; }
.status span { height: 18px; border: 1px solid #a0a0a0; padding: 0 1px; line-height: 16px; white-space: nowrap; overflow: hidden; }
.status .msg { flex: 1; font-family: "Liberation Sans Narrow", "Liberation Sans", "Noto Sans CJK SC", sans-serif; font-size: 13px; }
.s10 { width: 10px; } .s42 { width: 42px; }
.status .pos { width: 188px; font-size: 11px; }
.status svg { width: 12px; height: 12px; margin: 4px 0 0 6px; }

/* dialogs float over the work area */
.dialog { position: absolute; background: #f0f0f0; box-shadow: 0 3px 12px rgba(0, 0, 0, .35); }
.dlg-title { display: flex; justify-content: flex-end; align-items: center; height: 25px; padding-right: 9px; background: #fff; }
.dlg-title h2 { flex: 1; margin: 0; padding-left: 3px; font-size: 13px; font-weight: normal; }
.machines { left: 200px; top: 327px; width: 305px; padding-bottom: 9px; border: 1px solid #aaa; }
.machines .listbox { margin: 7px 4px 7px 5px; }
.sel td { background: #f0f0f0; }
.sel td:first-child { background: #fff; }
.grid input { display: block; margin: 1px 0 0 4px; }
.dlg-buttons { display: grid; grid-template-columns: repeat(4, 1fr); gap: 5px; padding: 0 10px; }
.port-dialog { left: 508px; top: 329px; width: 283px; border: 1px solid #a0683a; }
.port-dialog .dlg-title svg { stroke: #000; }
.form { padding: 5px 5px 6px 6px; }
.form hr { height: 2px; margin: 6px 7px 6px 0; border: 0; border-top: 1px solid #a0a0a0; border-bottom: 1px solid #fff; }
.name-row, .row { display: grid; align-items: center; }
.name-row { grid-template-columns: 76px 1fr; column-gap: 5px; }
.name-row label, .row label { text-align: right; white-space: nowrap; }
.name-row input { width: 100%; height: 23px; padding: 0 2px 2px; border: 1px solid #7a7a7a; font-size: 11px; }
.row { grid-template-columns: 64px 147px 52px; column-gap: 2px; padding-left: 2px; }
.row label { padding-right: 2px; }
.radio { display: flex; align-items: center; gap: 3px; height: 15px; margin: 0 0 2px 6px; }
.radio input { appearance: none; width: 13px; height: 13px; border: 1px solid #333; border-radius: 50%; background: #fff; }
.radio input:checked { background: radial-gradient(circle, #333 3px, #fff 4px); }
.row + .radio { margin: 5px 0 4px 6px; }
.row input { height: 21px; width: 100%; border: 1px solid #ccc; }
.row + hr { margin: 7px 0 3px 2px; }
.combo { position: relative; }
.combo select { display: block; width: 100%; height: 22px; border-color: #0054a0; background-color: #cce4f7; font-size: 11px; }
.drop { position: absolute; z-index: 2; left: 0; right: 0; top: 21px; display: flex; border: 1px solid #646464; background: #fff; box-shadow: 3px 3px 2px rgba(0, 0, 0, .5); }
.drop ul { flex: 1; margin: 0; padding: 0; list-style: none; font-size: 11px; line-height: 13px; }
.drop li { height: 13px; padding-left: 1px; }
.drop .hot { background: #0078d7; color: #fff; }
.drop-scroll { width: 17px; display: flex; flex-direction: column; align-items: center; padding: 6px 0; background: #f0f0f0; }
.drop-scroll i { flex: none; width: 15px; height: 42px; margin: 5px 0 auto; background: #cdcdcd; }
.foot { display: flex; justify-content: space-between; align-items: flex-end; padding: 0 1px 0 2px; }
.foot input { width: 209px; height: 23px; border: 1px solid #808080; background: #f0f0f0; }
.foot .btn { width: 52px; }
```
FILE: app.js
```js
// Rulers and grid: one major step is 50 mm, split into ten ticks.
const NS = 'http://www.w3.org/2000/svg';
const STEP = 102.6;

function add(parent, name, attrs, text) {
  const el = document.createElementNS(NS, name);
  for (const key in attrs) el.setAttribute(key, attrs[key]);
  if (text) el.textContent = text;
  parent.appendChild(el);
}

function line(parent, x1, y1, x2, y2, extra) {
  add(parent, 'line', Object.assign({ x1, y1, x2, y2, stroke: '#111' }, extra));
}

function draw() {
  const rx = document.getElementById('rulerX');
  const ry = document.getElementById('rulerY');
  const cv = document.getElementById('canvas');
  [rx, ry, cv].forEach(s => s.replaceChildren());
  const w = rx.clientWidth, h = ry.clientHeight;
  const dash = { stroke: '#a4a48c', 'stroke-dasharray': '4 3' };

  for (let i = 0; 3 + i * STEP / 10 < w; i++) {
    const x = Math.round(3 + i * STEP / 10) + 0.5;
    line(rx, x, i % 10 ? (i % 5 ? 13 : 11) : 0, x, 16);
    if (i % 10 === 0) {
      line(cv, x - 1, 0, x - 1, '100%', dash);
      // the label of the first line would fall outside the ruler
      if (i > 0) add(rx, 'text', { x: x, y: 11, 'text-anchor': 'end' }, (100 + i * 5).toFixed(1));
    }
  }
  for (let i = -8; 87 + i * STEP / 10 < h; i++) {
    const y = Math.round(87 + i * STEP / 10) + 0.5;
    line(ry, i % 10 ? (i % 5 ? 13 : 10) : 0, y, 17, y);
    if (i % 10 === 0) {
      line(cv, 0, y - 1, '100%', y - 1, dash);
      add(ry, 'text', { transform: `translate(12 ${y}) rotate(-90)` }, (250 + i * 5).toFixed(1));
    }
  }
  // cursor position marks
  line(rx, 823, 0, 823, 17, { 'stroke-width': 3 });
  line(ry, 0, 524, 17, 524, { 'stroke-width': 2 });
}

draw();
addEventListener('resize', draw);
```
